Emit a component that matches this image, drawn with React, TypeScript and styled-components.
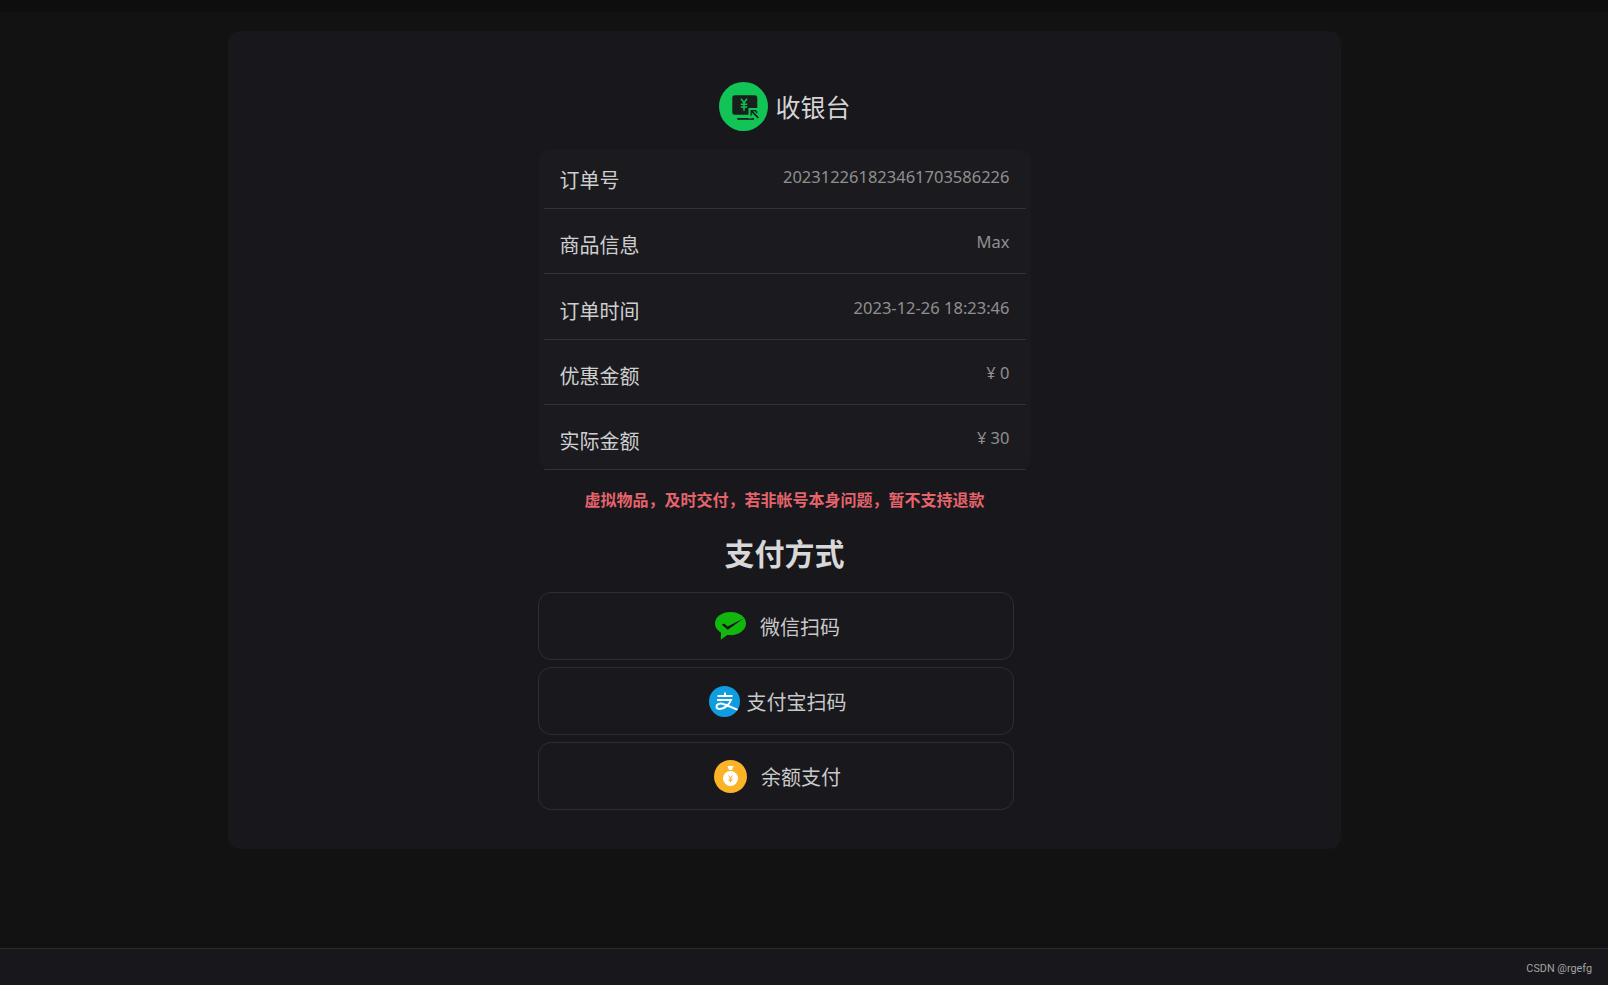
import React from "react";
import styled, { createGlobalStyle } from "styled-components";

const GlobalStyle = createGlobalStyle`
  html, body {
    margin: 0;
    padding: 0;
    background: #121212;
  }
  body {
    font-family: "Noto Sans", "Noto Sans CJK SC", sans-serif;
  }
`;

const Page = styled.div`
  width: 1608px;
  height: 985px;
  display: flex;
  flex-direction: column;
  overflow: hidden;
  background: #121212;
`;

const TopEdge = styled.div`
  height: 12px;
  flex: none;
  background: #0e0e0f;
`;

const Main = styled.main`
  flex: 1;
  padding: 19px 267px 0 228px;
`;

const Card = styled.section`
  height: 818px;
  box-sizing: border-box;
  padding-top: 51px;
  border-radius: 12px;
  background: #17171c;
  display: flex;
  flex-direction: column;
  align-items: center;
`;

const Title = styled.h1`
  margin: 0;
  height: 49px;
  padding-left: 1px;
  display: flex;
  align-items: center;
  gap: 7px;
  font-size: 25px;
  line-height: 50px;
  font-weight: 400;
  color: #d4d4d4;
`;

const Column = styled.div`
  width: 492px;
  margin-top: 18px;
  display: flex;
  flex-direction: column;
`;

const InfoTable = styled.div`
  height: 321px;
  box-sizing: border-box;
  padding: 0 5px;
  border-radius: 12px;
  background: #1b1b1f;
`;

const InfoRow = styled.div`
  height: 65.4px;
  box-sizing: border-box;
  padding: 0 16px;
  display: flex;
  justify-content: space-between;
  border-bottom: 1px solid #333336;
  &:first-child {
    height: 59.9px;
  }
`;

const InfoLabel = styled.span`
  margin-top: auto;
  margin-bottom: 13px;
  font-size: 20px;
  line-height: 28px;
  color: #cfcfcf;
`;

const InfoValue = styled.span`
  margin-top: auto;
  margin-bottom: 18px;
  font-size: 16.5px;
  line-height: 26px;
  color: #8f8f8f;
`;

const Notice = styled.p`
  margin: 19px 0 0;
  text-align: center;
  font-size: 16px;
  line-height: 22px;
  font-weight: 700;
  color: #e5646c;
`;

const MethodsTitle = styled.h2`
  margin: 22px 0 0;
  text-align: center;
  font-size: 30px;
  line-height: 42px;
  font-weight: 700;
  color: #d8d8d8;
`;

const MethodList = styled.div`
  width: 476px;
  margin: 17px 0 0 -1px;
  display: flex;
  flex-direction: column;
  gap: 7px;
`;

const MethodButton = styled.button<{ $gap: number }>`
  height: 68px;
  box-sizing: border-box;
  padding: 0 0 0 4px;
  display: flex;
  align-items: center;
  justify-content: center;
  gap: ${({ $gap }) => $gap}px;
  border: 1px solid #2d2d33;
  border-radius: 13px;
  background: #18181d;
  font-family: inherit;
  font-size: 20px;
  color: #c9c9c9;
`;

const Footer = styled.footer`
  height: 37px;
  flex: none;
  box-sizing: border-box;
  padding: 2px 16px 0 0;
  display: flex;
  align-items: center;
  justify-content: flex-end;
  border-top: 1px solid #2b2b2f;
  background: #17171c;
  font-family: "Roboto", sans-serif;
  font-size: 10.8px;
  color: #a3a3a3;
`;

const CashierIcon = () => (
  <svg width="49" height="49" viewBox="0 0 49 49">
    <circle cx="24.5" cy="24.5" r="24.5" fill="#12c455" />
    <rect x="13.3" y="13.3" width="25" height="19.500" rx="2.500" fill="#17201c" />
    <rect x="18.300" y="36" width="16.700" height="1.800" fill="#17201c" />
    <path d="M22 16.800l3 4 3-4M25 20.800v8M21.800 22.200h6.400M21.800 25h6.400" fill="none" stroke="#12c455" strokeWidth="1.500" />
    <path d="M29.500 26h10.500v3.200h-4.500l6.200 6.200-2.800 2.800-6.200-6.200v4.500h-3.200z" fill="#12c455" />
    <path d="M31.500 28h5.800v1.300h-3.400l6 6-1.100 1.100-6-6v3.400h-1.300z" fill="#17201c" />
  </svg>
);

const WechatIcon = () => (
  <svg width="31" height="28" viewBox="0 0 31 28">
    <ellipse cx="15.500" cy="11.500" rx="15.500" ry="11.500" fill="#12b70e" />
    <path d="M6 19L5.800 27.700 13 22.500z" fill="#12b70e" />
    <path d="M6.800 12.800L9 11.400 12.600 14.600 28.800 6.200 12.800 17.800z" fill="#14141a" />
  </svg>
);

const AlipayIcon = () => (
  <svg width="31" height="31" viewBox="0 0 31 31">
    <defs>
      <clipPath id="alipay-round">
        <circle cx="15.500" cy="15.500" r="15.500" />
      </clipPath>
    </defs>
    <circle cx="15.500" cy="15.500" r="15.500" fill="#0f9de2" />
    <path
      d="M8.500 10H23.500M16 6.500V10M8 14H22C20 19 15 23 11 23C9 23 7.500 22 7.500 20.500C7.500 18 11 17 14 18C18 19 24 22 31 25"
      fill="none"
      stroke="#fff"
      strokeWidth="2"
      clipPath="url(#alipay-round)"
    />
  </svg>
);

const BalanceIcon = () => (
  <svg width="33" height="33" viewBox="0 0 33 33">
    <circle cx="16.500" cy="16.500" r="16.500" fill="#fbb327" />
    <path d="M13.500 6h6l-1.500 4h-3z" fill="#fff" />
    <circle cx="16.500" cy="18.500" r="7.500" fill="#fff" />
    <path d="M14.500 15.500l2 2.500 2-2.500M16.500 18v4M14.500 19h4M14.500 20.700h4" fill="none" stroke="#fbb327" strokeWidth="1" />
  </svg>
);

const infoRows = [
  { label: "订单号", value: "202312261823461703586226" },
  { label: "商品信息", value: "Max" },
  { label: "订单时间", value: "2023-12-26 18:23:46" },
  { label: "优惠金额", value: "¥ 0" },
  { label: "实际金额", value: "¥ 30" },
];

export default function App() {
  return (
    <Page>
      <GlobalStyle />
      <TopEdge />
      <Main>
        <Card>
          <Title>
            <CashierIcon />
            收银台
          </Title>
          <Column>
            <InfoTable>
              {infoRows.map((row) => (
                <InfoRow key={row.label}>
                  <InfoLabel>{row.label}</InfoLabel>
                  <InfoValue>{row.value}</InfoValue>
                </InfoRow>
              ))}
            </InfoTable>
            <Notice>虚拟物品，及时交付，若非帐号本身问题，暂不支持退款</Notice>
            <MethodsTitle>支付方式</MethodsTitle>
            <MethodList>
              <MethodButton $gap={14}>
                <WechatIcon />
                微信扫码
              </MethodButton>
              <MethodButton $gap={7}>
                <AlipayIcon />
                支付宝扫码
              </MethodButton>
              <MethodButton $gap={14}>
                <BalanceIcon />
                余额支付
              </MethodButton>
            </MethodList>
          </Column>
        </Card>
      </Main>
      <Footer>CSDN @rgefg</Footer>
    </Page>
  );
}
